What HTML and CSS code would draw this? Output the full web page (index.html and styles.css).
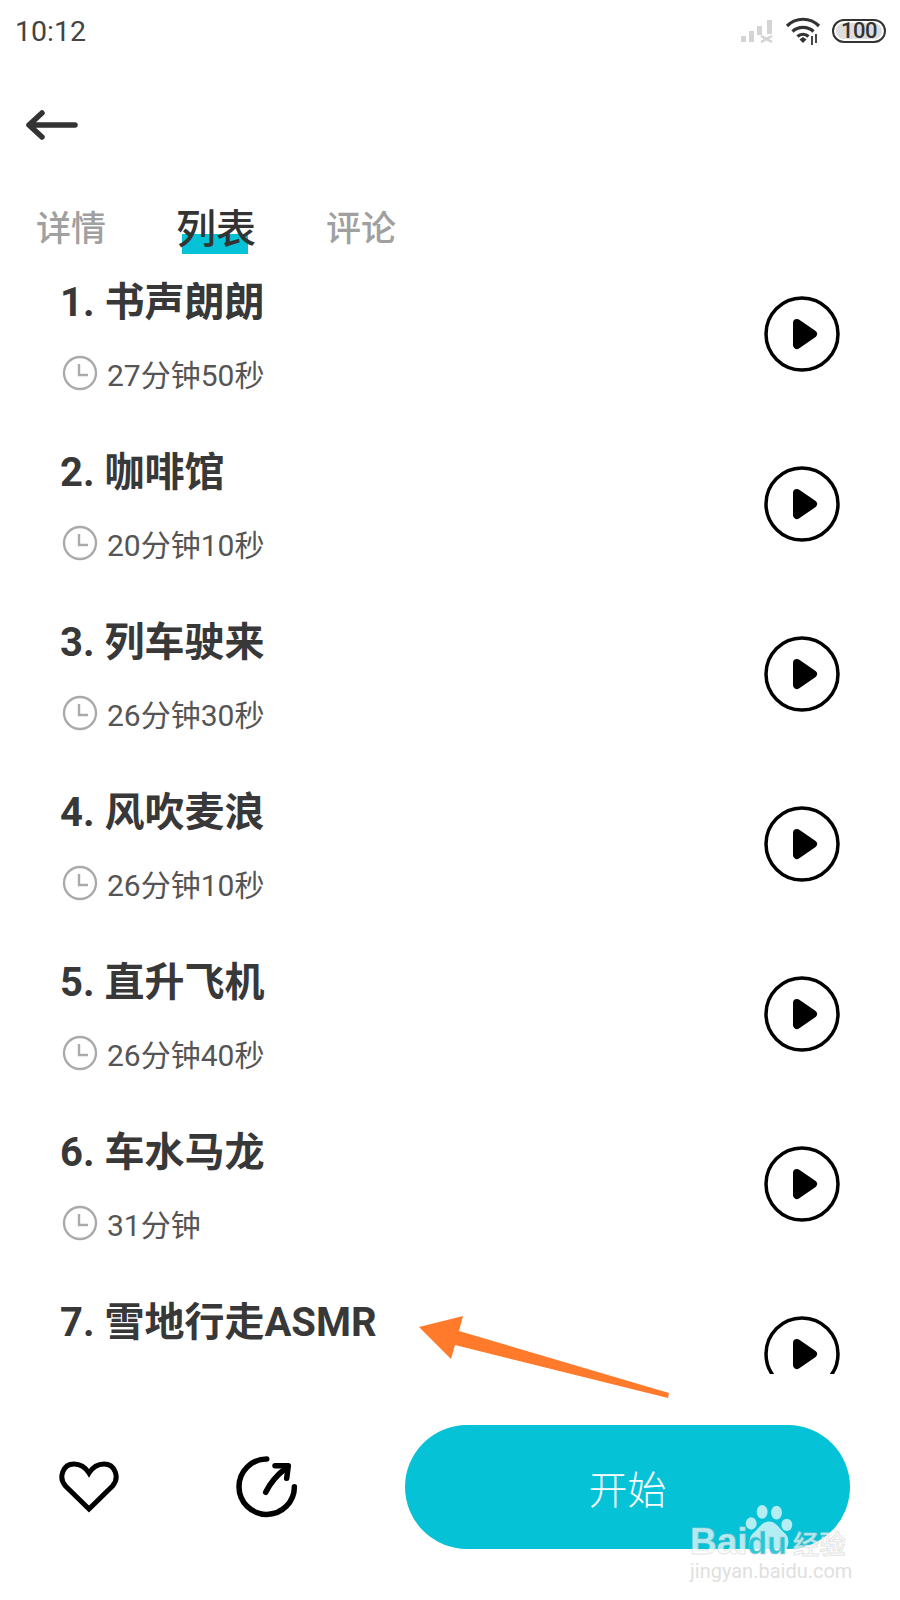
FILE: index.html
```html
<!DOCTYPE html>
<html lang="zh">
<head>
<meta charset="utf-8">
<title>列表</title>
<link rel="stylesheet" href="styles.css">
</head>
<body>
<div class="screen">
  <header class="status">
    <span class="time">10:12</span>
    <div class="status-icons">
      <svg class="sig" viewBox="0 0 34 24" width="34" height="24"><g fill="#d4d4d4"><rect x="1" y="17" width="5" height="6"/><rect x="9" y="12" width="5" height="11"/><rect x="17" y="7" width="5" height="9"/><rect x="27" y="1" width="5" height="14"/></g><path d="M21 17l11 6M32 17l-11 6" stroke="#d4d4d4" stroke-width="2.5" fill="none"/></svg>
      <svg class="wifi" viewBox="0 0 36 28" width="36" height="28"><g fill="none" stroke="#333" stroke-width="3.2"><path d="M2 9C11 0 25 0 34 9"/><path d="M7.500 14.500C13 9 23 9 28.500 14.500"/><path d="M12.500 19.500C15.500 16.500 20.500 16.500 23.500 19.500"/></g><path d="M14.500 22.500L18 20l3.500 2.500L18 26z" fill="#333"/><path d="M27 19v9M31 17v9" stroke="#333" stroke-width="1.800"/></svg>
      <div class="battery"><span class="battery-level">100</span></div>
    </div>
  </header>
  <nav class="toolbar">
    <svg class="back" viewBox="0 0 54 30" width="54" height="30"><path d="M4 15H50M17 3L4 15l13 12" fill="none" stroke="#333" stroke-width="5.500" stroke-linecap="round" stroke-linejoin="round"/></svg>
  </nav>
  <div class="tabs">
    <span class="tab">详情</span>
    <span class="tab tab-active">列表</span>
    <span class="tab">评论</span>
  </div>
  <main class="list">
    <article class="row">
      <div class="info"><h2 class="title">1. 书声朗朗</h2><div class="dur"><svg class="clock" viewBox="0 0 36 36" width="36" height="36"><circle cx="18" cy="18" r="16" fill="none" stroke="#aaa" stroke-width="2.4"/><path d="M17 9v11h9" fill="none" stroke="#aaa" stroke-width="2.4"/></svg><span>27分钟50秒</span></div></div>
      <svg class="play" viewBox="0 0 76 76" width="76" height="76"><circle cx="38" cy="38" r="36" fill="none" stroke="#000" stroke-width="3.5"/><polygon points="33,27 49,38 33,49" fill="#000" stroke="#000" stroke-width="8" stroke-linejoin="round"/></svg>
    </article>
    <article class="row">
      <div class="info"><h2 class="title">2. 咖啡馆</h2><div class="dur"><svg class="clock" viewBox="0 0 36 36" width="36" height="36"><circle cx="18" cy="18" r="16" fill="none" stroke="#aaa" stroke-width="2.4"/><path d="M17 9v11h9" fill="none" stroke="#aaa" stroke-width="2.4"/></svg><span>20分钟10秒</span></div></div>
      <svg class="play" viewBox="0 0 76 76" width="76" height="76"><circle cx="38" cy="38" r="36" fill="none" stroke="#000" stroke-width="3.5"/><polygon points="33,27 49,38 33,49" fill="#000" stroke="#000" stroke-width="8" stroke-linejoin="round"/></svg>
    </article>
    <article class="row">
      <div class="info"><h2 class="title">3. 列车驶来</h2><div class="dur"><svg class="clock" viewBox="0 0 36 36" width="36" height="36"><circle cx="18" cy="18" r="16" fill="none" stroke="#aaa" stroke-width="2.4"/><path d="M17 9v11h9" fill="none" stroke="#aaa" stroke-width="2.4"/></svg><span>26分钟30秒</span></div></div>
      <svg class="play" viewBox="0 0 76 76" width="76" height="76"><circle cx="38" cy="38" r="36" fill="none" stroke="#000" stroke-width="3.5"/><polygon points="33,27 49,38 33,49" fill="#000" stroke="#000" stroke-width="8" stroke-linejoin="round"/></svg>
    </article>
    <article class="row">
      <div class="info"><h2 class="title">4. 风吹麦浪</h2><div class="dur"><svg class="clock" viewBox="0 0 36 36" width="36" height="36"><circle cx="18" cy="18" r="16" fill="none" stroke="#aaa" stroke-width="2.4"/><path d="M17 9v11h9" fill="none" stroke="#aaa" stroke-width="2.4"/></svg><span>26分钟10秒</span></div></div>
      <svg class="play" viewBox="0 0 76 76" width="76" height="76"><circle cx="38" cy="38" r="36" fill="none" stroke="#000" stroke-width="3.5"/><polygon points="33,27 49,38 33,49" fill="#000" stroke="#000" stroke-width="8" stroke-linejoin="round"/></svg>
    </article>
    <article class="row">
      <div class="info"><h2 class="title">5. 直升飞机</h2><div class="dur"><svg class="clock" viewBox="0 0 36 36" width="36" height="36"><circle cx="18" cy="18" r="16" fill="none" stroke="#aaa" stroke-width="2.4"/><path d="M17 9v11h9" fill="none" stroke="#aaa" stroke-width="2.4"/></svg><span>26分钟40秒</span></div></div>
      <svg class="play" viewBox="0 0 76 76" width="76" height="76"><circle cx="38" cy="38" r="36" fill="none" stroke="#000" stroke-width="3.5"/><polygon points="33,27 49,38 33,49" fill="#000" stroke="#000" stroke-width="8" stroke-linejoin="round"/></svg>
    </article>
    <article class="row">
      <div class="info"><h2 class="title">6. 车水马龙</h2><div class="dur"><svg class="clock" viewBox="0 0 36 36" width="36" height="36"><circle cx="18" cy="18" r="16" fill="none" stroke="#aaa" stroke-width="2.4"/><path d="M17 9v11h9" fill="none" stroke="#aaa" stroke-width="2.4"/></svg><span>31分钟</span></div></div>
      <svg class="play" viewBox="0 0 76 76" width="76" height="76"><circle cx="38" cy="38" r="36" fill="none" stroke="#000" stroke-width="3.5"/><polygon points="33,27 49,38 33,49" fill="#000" stroke="#000" stroke-width="8" stroke-linejoin="round"/></svg>
    </article>
    <article class="row">
      <div class="info"><h2 class="title">7. 雪地行走ASMR</h2></div>
      <svg class="play" viewBox="0 0 76 76" width="76" height="76"><circle cx="38" cy="38" r="36" fill="none" stroke="#000" stroke-width="3.5"/><polygon points="33,27 49,38 33,49" fill="#000" stroke="#000" stroke-width="8" stroke-linejoin="round"/></svg>
    </article>
  </main>
  <footer class="bar">
    <svg class="heart" viewBox="0 0 60 54" width="60" height="54"><path d="M30 49L6.500 26C-1 17.500 4 4 15 4c6.500 0 11.500 3.500 15 9 3.500-5.500 8.500-9 15-9 11 0 16 13.500 8.500 22z" fill="none" stroke="#000" stroke-width="5"/></svg>
    <svg class="share" viewBox="0 0 64 64" width="64" height="64"><g fill="none" stroke="#000" stroke-width="5.500" stroke-linecap="round" stroke-linejoin="round"><path d="M31.700 4A27.700 27.700 0 1 0 59.400 31.700"/><path d="M30.700 37.300Q37 24 51 13"/><path d="M40 10.700H53.300L51.700 23.300"/></g></svg>
    <button class="start">开始</button>
  </footer>
  <svg class="annot" viewBox="0 0 900 1600" width="900" height="1600"><polygon points="419,1327 463,1316 459,1331 669,1393 668,1398 455,1345 451,1359" fill="#ff7a2b"/></svg>
  <div class="mark">
    <svg class="paw" viewBox="0 0 70 73" width="48" height="50"><g fill="#fff" fill-opacity=".7"><ellipse cx="25" cy="10" rx="8" ry="10"/><ellipse cx="46" cy="11" rx="8" ry="10"/><ellipse cx="9" cy="27" rx="8" ry="9"/><ellipse cx="61" cy="29" rx="8" ry="9"/><path d="M35 24c11 0 15 11 24 18 9 9 3 30-10 30H21C8 72 2 51 11 42c9-7 13-18 24-18z"/></g></svg>
    <span class="mark-brand">Bai<span class="mark-du">du</span><span class="mark-cn">经验</span></span>
    <span class="mark-url">jingyan.baidu.com</span>
  </div>
</div>
</body>
</html>
```
FILE: styles.css
```css
* { box-sizing: border-box; }
html, body { margin: 0; padding: 0; background: #fff; }
.screen {
  position: relative;
  width: 900px;
  height: 1600px;
  display: flex;
  flex-direction: column;
  overflow: hidden;
  font-family: Roboto, "Noto Sans CJK SC", sans-serif;
  color: #333;
}
.status {
  height: 62px;
  flex: none;
  display: flex;
  align-items: center;
  justify-content: space-between;
  padding: 0 14px 0 15px;
}
.time { font-size: 28.5px; color: #444; }
.status-icons { display: flex; align-items: center; gap: 11px; }
.battery {
  width: 54px;
  height: 24px;
  border: 2.5px solid #333;
  border-radius: 12px;
  padding: 2px;
  display: flex;
}
.battery-level {
  flex: 1;
  background: #ddd;
  border-radius: 8px;
  font-size: 22px;
  font-weight: 500;
  line-height: 15px;
  letter-spacing: -.5px;
  text-align: center;
  color: #333;
}
.toolbar {
  height: 144px;
  flex: none;
  display: flex;
  align-items: center;
  padding: 0 0 18px 25px;
}
.tabs {
  height: 56px;
  flex: none;
  display: flex;
  align-items: flex-start;
  padding-left: 36px;
  gap: 70px;
}
.tab {
  font-size: 35px;
  line-height: 48px;
  font-weight: 500;
  color: #a0a0a0;
}
.tab-active {
  position: relative;
  font-size: 40px;
  color: #333;
  z-index: 0;
}
.tab-active::after {
  content: "";
  position: absolute;
  left: 6px;
  right: 8px;
  top: 28px;
  height: 20px;
  background: #06c2d6;
  z-index: -1;
}
.list { flex: 1; min-height: 0; overflow: hidden; }
.row {
  height: 170px;
  display: flex;
  justify-content: space-between;
  align-items: flex-start;
  padding: 16px 60px 0 60px;
}
.title {
  margin: 0;
  font-size: 40px;
  line-height: 50px;
  font-weight: 700;
  color: #383838;
}
.dur {
  margin-top: 25px;
  padding-left: 2px;
  height: 40px;
  display: flex;
  align-items: center;
  gap: 9px;
  font-size: 30px;
  color: #555;
}
.play { margin-top: 18px; }
.bar {
  height: 226px;
  flex: none;
  display: flex;
  align-items: center;
  padding: 0 50px 0 59px;
}
.share { margin-left: 116px; }
.start {
  margin-left: auto;
  width: 445px;
  height: 124px;
  border: 0;
  border-radius: 62px;
  background: #06c2d6;
  color: #fff;
  font: 300 39px "Noto Sans CJK SC", sans-serif;
}
.annot { position: absolute; left: 0; top: 0; pointer-events: none; }
.mark { position: absolute; left: 688px; top: 1500px; width: 180px; height: 84px; }
.paw { position: absolute; left: 57px; top: 5px; }
.mark-brand {
  position: absolute;
  left: 2px;
  top: 26px;
  font: 700 37px/32px "Liberation Sans", sans-serif;
  color: rgba(255,255,255,.7);
  -webkit-text-stroke: 1px rgba(200,200,200,.5);
  white-space: nowrap;
}
.mark-du { color: rgba(6,194,214,.85); font-size: 32px; }
.mark-cn {
  margin-left: 6px;
  font: 500 26.5px/32px "Noto Sans CJK SC", sans-serif;
}
.mark-url {
  position: absolute;
  left: 2px;
  top: 60px;
  font: 400 20px/22px Roboto, sans-serif;
  color: #e0e0e0;
  white-space: nowrap;
}
```
